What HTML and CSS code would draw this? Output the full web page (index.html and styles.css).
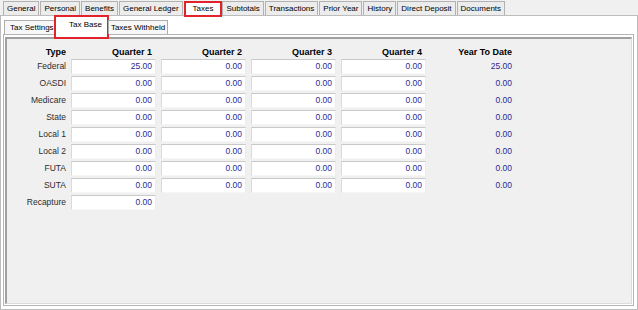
FILE: index.html
```html
<!DOCTYPE html>
<html lang="en">
<head>
  <meta charset="UTF-8">
  <title>Taxes - Tax Base</title>
  <link rel="stylesheet" href="styles.css">
</head>
<body>
  <div class="tabs">
    <div class="tab">General</div>
    <div class="tab">Personal</div>
    <div class="tab">Benefits</div>
    <div class="tab">General Ledger</div>
    <div class="tab active">Taxes</div>
    <div class="tab">Subtotals</div>
    <div class="tab">Transactions</div>
    <div class="tab">Prior Year</div>
    <div class="tab">History</div>
    <div class="tab">Direct Deposit</div>
    <div class="tab">Documents</div>
  </div>
  <div class="page">
    <div class="subtabs">
      <div class="subtab first">Tax Settings</div>
      <div class="subtab active">Tax Base</div>
      <div class="subtab last">Taxes Withheld</div>
    </div>
    <div class="panel">
      <div class="panel-body">
        <div class="grid">
          <div class="head">Type</div>
          <div class="head num">Quarter 1</div>
          <div class="head num">Quarter 2</div>
          <div class="head num">Quarter 3</div>
          <div class="head num">Quarter 4</div>
          <div class="head num">Year To Date</div>

          <div class="label">Federal</div>
          <div class="field">25.00</div><div class="field">0.00</div><div class="field">0.00</div><div class="field">0.00</div>
          <div class="ytd">25.00</div>

          <div class="label">OASDI</div>
          <div class="field">0.00</div><div class="field">0.00</div><div class="field">0.00</div><div class="field">0.00</div>
          <div class="ytd">0.00</div>

          <div class="label">Medicare</div>
          <div class="field">0.00</div><div class="field">0.00</div><div class="field">0.00</div><div class="field">0.00</div>
          <div class="ytd">0.00</div>

          <div class="label">State</div>
          <div class="field">0.00</div><div class="field">0.00</div><div class="field">0.00</div><div class="field">0.00</div>
          <div class="ytd">0.00</div>

          <div class="label">Local 1</div>
          <div class="field">0.00</div><div class="field">0.00</div><div class="field">0.00</div><div class="field">0.00</div>
          <div class="ytd">0.00</div>

          <div class="label">Local 2</div>
          <div class="field">0.00</div><div class="field">0.00</div><div class="field">0.00</div><div class="field">0.00</div>
          <div class="ytd">0.00</div>

          <div class="label">FUTA</div>
          <div class="field">0.00</div><div class="field">0.00</div><div class="field">0.00</div><div class="field">0.00</div>
          <div class="ytd">0.00</div>

          <div class="label">SUTA</div>
          <div class="field">0.00</div><div class="field">0.00</div><div class="field">0.00</div><div class="field">0.00</div>
          <div class="ytd">0.00</div>

          <div class="label">Recapture</div>
          <div class="field">0.00</div>
        </div>
      </div>
    </div>
  </div>
</body>
</html>
```

FILE: styles.css
```css
html, body {
  margin: 0;
  width: 638px;
  height: 310px;
  overflow: hidden;
}
body {
  font-family: "Liberation Sans", Arial, sans-serif;
  background: #f0f0f0;
  color: #000;
  display: flex;
  flex-direction: column;
}

/* top tab strip */
.tabs {
  height: 15px;
  display: flex;
  align-items: flex-end;
  padding-left: 3px;
  position: relative;
  z-index: 2;
}
.tab {
  flex-shrink: 0;
  height: 13px;
  line-height: 13px;
  font-size: 8px;
  padding: 0 3px;
  background: #ececec;
  border: 1px solid #b2b2b2;
  border-bottom: none;
  margin-right: 1px;
  white-space: nowrap;
}
.tab.active {
  height: 12px;
  line-height: 12px;
  background: #fff;
  border: 2px solid #e3232b;
  padding: 0 7px;
  margin: 0 0 -2px 0;
}

/* outer tab page */
.page {
  flex: 1;
  background: #fff;
  border: 1px solid #bcbcbc;
  padding: 1px 3px 3px 2px;
  display: flex;
  flex-direction: column;
}
.subtabs {
  height: 17px;
  display: flex;
  align-items: flex-end;
  padding-left: 1px;
  position: relative;
  z-index: 2;
}
.subtab {
  flex-shrink: 0;
  height: 13px;
  line-height: 13px;
  font-size: 8px;
  background: #f7f7f7;
  border: 1px solid #adadad;
  border-bottom: none;
  white-space: nowrap;
  overflow: hidden;
}
.subtab.first {
  width: 48px;
  padding-left: 5px;
}
.subtab.active {
  height: 20px;
  line-height: 16px;
  background: #fff;
  border: 2px solid #e3232b;
  padding: 0 5px 0 13px;
  margin: 0 -1px -5px -5px;
}
.subtab.last {
  padding: 0 2px;
}

/* inner tab page */
.panel {
  flex: 1;
  border: 1px solid #b4b4b4;
  background: #fff;
  padding: 2px 1px 1px 1px;
  display: flex;
}
.panel-body {
  flex: 1;
  background: #f0f0f0;
  border-top: 2px solid #a0a0a0;
  border-left: 2px solid #a0a0a0;
  border-right: 1px solid #dcdcdc;
  border-bottom: 1px solid #dcdcdc;
}

/* form grid */
.grid {
  display: grid;
  grid-template-columns: 59px repeat(5, 85px);
  grid-template-rows: 18px;
  grid-auto-rows: 15px;
  column-gap: 5px;
  row-gap: 2px;
  font-size: 8.5px;
}
.head {
  font-size: 9px;
  font-weight: bold;
  text-align: right;
  align-self: end;
  line-height: 9px;
  white-space: nowrap;
}
.head.num {
  padding-right: 4px;
}
.label {
  text-align: right;
  line-height: 15px;
  color: #2c2c2c;
  white-space: nowrap;
}
.field {
  background: #fff;
  border: 1px solid;
  border-color: #c9c9c9 #ececec #f6f6f6 #dadada;
  line-height: 13px;
  text-align: right;
  padding-right: 3px;
  color: #2a2a96;
}
.ytd {
  line-height: 15px;
  text-align: right;
  padding-right: 4px;
  color: #2a2a96;
}
```
